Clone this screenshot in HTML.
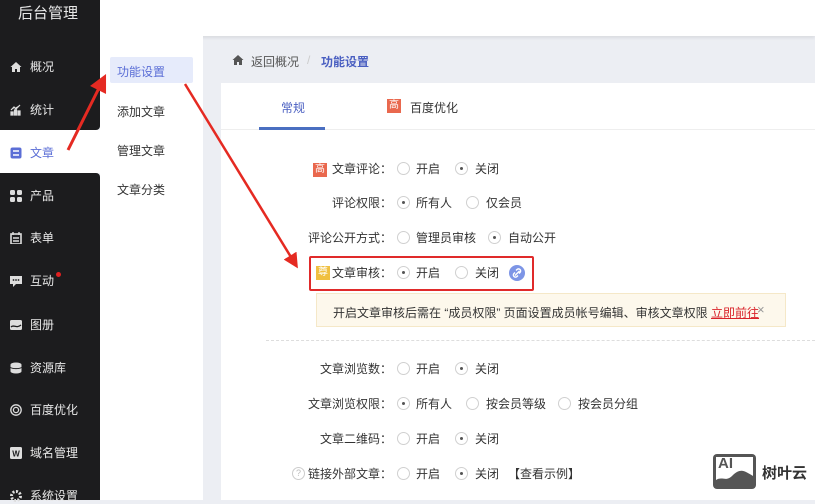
<!DOCTYPE html>
<html><head><meta charset="utf-8"><style>
*{margin:0;padding:0;box-sizing:border-box}
body{width:815px;height:500px;overflow:hidden;position:relative;background:#eceef3;font-family:"Liberation Sans","Noto Sans CJK SC",sans-serif;font-size:12px;color:#333}
.a{position:absolute;white-space:nowrap}
.dark{position:absolute;left:0;width:100px;background:#1c1c1e}
.nav{position:absolute;left:10px;color:#e8e8e8;font-size:12px;display:flex;align-items:center;gap:8px}
.ic{width:12px;height:12px;display:inline-block}
.sub{position:absolute;left:117px;font-size:12px;color:#333}
.r{position:absolute;width:13px;height:13px;border:1px solid #d0d0d0;border-radius:50%;background:#fff}
.r.on::after{content:"";position:absolute;left:4px;top:4px;width:3px;height:3px;border-radius:50%;background:#555}
.lb{position:absolute;right:423px;text-align:right;white-space:nowrap;color:#333;line-height:14px}
.t{position:absolute;white-space:nowrap;color:#333;line-height:14px}
.bd{position:absolute;width:14px;height:14px;color:#fff;font-size:10px;text-align:center;line-height:14px}
</style></head><body>
<div class="a" style="left:100px;top:0;width:715px;height:36px;background:#fff;box-shadow:0 2px 3px rgba(0,0,0,.08)"></div>
<div class="dark" style="top:0;height:130px;border-radius:0 0 4px 0"></div>
<div class="dark" style="top:173px;height:327px;border-radius:0 4px 0 0"></div>
<div class="a" style="left:0;top:130px;width:100px;height:43px;background:#fff"></div>
<div class="a" style="left:18px;top:2px;color:#e8e8e8;font-size:15px">后台管理</div>
<div class="nav" style="top:58px"><svg class="ic" viewBox="0 0 12 12"><path d="M6 1L0.5 6H2v5h3V8h2v3h3V6h1.5z" fill="#ddd"/></svg>概况</div>
<div class="nav" style="top:101px"><svg class="ic" viewBox="0 0 12 12"><path d="M1 11V8h2v3zM4.5 11V6h2v5zM8 11V7h2v4zM1 6l3-3 2 2 4-4" stroke="#ddd" fill="#ddd" stroke-width="1.2"/></svg>统计</div>
<div class="nav" style="top:144px;color:#5b6ed6"><svg class="ic" viewBox="0 0 12 12"><rect x="0.5" y="0.5" width="11" height="11" rx="2" fill="#5b6ed6"/><path d="M3 4h6M3 8h6" stroke="#fff" stroke-width="1.4"/></svg>文章</div>
<div class="nav" style="top:187px"><svg class="ic" viewBox="0 0 12 12"><rect x="0" y="0" width="5" height="5" rx="1.5" fill="#ddd"/><rect x="7" y="0" width="5" height="5" rx="1.5" fill="#ddd"/><rect x="0" y="7" width="5" height="5" rx="1.5" fill="#ddd"/><rect x="7" y="7" width="5" height="5" rx="1.5" fill="#ddd"/></svg>产品</div>
<div class="nav" style="top:229px"><svg class="ic" viewBox="0 0 12 12"><rect x="1" y="2" width="10" height="10" fill="none" stroke="#ddd" stroke-width="1.6"/><path d="M3 0v3M9 0v3M3 6h6M3 9h6" stroke="#ddd" stroke-width="1.4"/></svg>表单</div>
<div class="nav" style="top:272px"><svg class="ic" viewBox="0 0 12 12"><path d="M0 1h12v8H6l-3 3V9H0z" fill="#ddd"/><circle cx="3.5" cy="5" r=".9" fill="#1c1c1e"/><circle cx="6" cy="5" r=".9" fill="#1c1c1e"/><circle cx="8.5" cy="5" r=".9" fill="#1c1c1e"/></svg>互动</div>
<div class="a" style="left:56px;top:272px;width:5px;height:5px;border-radius:50%;background:#e02020"></div>
<div class="nav" style="top:316px"><svg class="ic" viewBox="0 0 12 12"><rect x="0" y="1" width="12" height="10" rx="1.5" fill="#ddd"/><path d="M1 8c3-3 5 2 10-2" stroke="#1c1c1e" stroke-width="1.3" fill="none"/></svg>图册</div>
<div class="nav" style="top:359px"><svg class="ic" viewBox="0 0 12 12"><ellipse cx="6" cy="2.5" rx="5.5" ry="2" fill="#ddd"/><rect x=".5" y="2.5" width="11" height="7" fill="#ddd"/><ellipse cx="6" cy="9.5" rx="5.5" ry="2" fill="#ddd"/><path d="M.5 5.5c2 1.5 9 1.5 11 0" stroke="#1c1c1e" fill="none"/></svg>资源库</div>
<div class="nav" style="top:401px"><svg class="ic" viewBox="0 0 12 12"><circle cx="6" cy="6" r="5.2" fill="none" stroke="#ddd" stroke-width="1.3"/><circle cx="6" cy="6" r="2.6" fill="none" stroke="#ddd" stroke-width="1.3"/></svg>百度优化</div>
<div class="nav" style="top:444px"><svg class="ic" viewBox="0 0 12 12"><rect x="0" y="0" width="12" height="12" rx="1.5" fill="#ddd"/><text x="6" y="9.5" font-size="8" font-weight="bold" text-anchor="middle" fill="#1c1c1e" font-family="Liberation Sans">W</text></svg>域名管理</div>
<div class="nav" style="top:487px"><svg class="ic" viewBox="0 0 12 12"><circle cx="6" cy="6" r="4.5" fill="none" stroke="#ddd" stroke-width="3" stroke-dasharray="2 1.5"/></svg>系统设置</div>
<div class="a" style="left:100px;top:36px;width:103px;height:464px;background:#fff"></div>
<div class="a" style="left:110px;top:57px;width:83px;height:26px;background:#e6ebfb;border-radius:2px"></div>
<div class="sub" style="top:63px;color:#5b6ed6">功能设置</div>
<div class="sub" style="top:103px">添加文章</div>
<div class="sub" style="top:142px">管理文章</div>
<div class="sub" style="top:181px">文章分类</div>
<svg class="a" style="left:232px;top:54px" width="12" height="12" viewBox="0 0 12 12"><path d="M6 1L0.5 6H2v5h3V8h2v3h3V6h1.5z" fill="#555"/></svg>
<div class="a" style="left:251px;top:53px;color:#555">返回概况</div>
<div class="a" style="left:307px;top:53px;color:#ccc">/</div>
<div class="a" style="left:321px;top:53px;color:#4a5fc1;font-weight:bold">功能设置</div>
<div class="a" style="left:221px;top:83px;width:594px;height:417px;background:#fff"></div>
<div class="a" style="left:221px;top:129px;width:594px;height:1px;background:#eee"></div>
<div class="a" style="left:281px;top:99px;color:#4a5fc1">常规</div>
<div class="a" style="left:259px;top:127px;width:66px;height:3px;background:#4a6fc1"></div>
<div class="bd" style="left:387px;top:99px;background:#e9684e">高</div>
<div class="a" style="left:410px;top:99px;color:#333">百度优化</div>

<div class="bd" style="left:313px;top:163px;background:#e9684e">高</div>
<div class="lb" style="top:162px">文章评论：</div>
<div class="r" style="left:397px;top:162px"></div><div class="t" style="left:416px;top:162px">开启</div>
<div class="r on" style="left:455px;top:162px"></div><div class="t" style="left:475px;top:162px">关闭</div>

<div class="lb" style="top:196px">评论权限：</div>
<div class="r on" style="left:397px;top:196px"></div><div class="t" style="left:416px;top:196px">所有人</div>
<div class="r" style="left:466px;top:196px"></div><div class="t" style="left:486px;top:196px">仅会员</div>

<div class="lb" style="top:231px">评论公开方式：</div>
<div class="r" style="left:397px;top:231px"></div><div class="t" style="left:416px;top:231px">管理员审核</div>
<div class="r on" style="left:488px;top:231px"></div><div class="t" style="left:508px;top:231px">自动公开</div>

<div class="a" style="left:309px;top:256px;width:225px;height:35px;border:2px solid #e02a2a;border-radius:2px"></div>
<div class="bd" style="left:316px;top:266px;background:#f0c040">尊</div>
<div class="lb" style="top:266px">文章审核：</div>
<div class="r on" style="left:397px;top:266px"></div><div class="t" style="left:416px;top:266px">开启</div>
<div class="r" style="left:455px;top:266px"></div><div class="t" style="left:475px;top:266px">关闭</div>
<svg class="a" style="left:509px;top:265px" width="16" height="16" viewBox="0 0 16 16"><circle cx="8" cy="8" r="8" fill="#7d95e6"/><path d="M6 10.5L10.5 6M7 5.5l1-1a2 2 0 013 3l-1 1M9 10.5l-1 1a2 2 0 01-3-3l1-1" stroke="#fff" stroke-width="1.4" fill="none"/></svg>

<div class="a" style="left:316px;top:293px;width:470px;height:34px;background:#fdf8ec;border:1px solid #f5e8c8"></div>
<div class="a" style="left:333px;top:304px;color:#333">开启文章审核后需在 “成员权限” 页面设置成员帐号编辑、审核文章权限 <span style="color:#d9232a;text-decoration:underline">立即前往</span></div>
<div class="a" style="left:757px;top:302px;color:#999;font-size:13px">×</div>
<div class="a" style="left:266px;top:340px;width:549px;border-top:1px dashed #ddd"></div>

<div class="lb" style="top:362px">文章浏览数：</div>
<div class="r" style="left:397px;top:362px"></div><div class="t" style="left:416px;top:362px">开启</div>
<div class="r on" style="left:455px;top:362px"></div><div class="t" style="left:475px;top:362px">关闭</div>

<div class="lb" style="top:397px">文章浏览权限：</div>
<div class="r on" style="left:397px;top:397px"></div><div class="t" style="left:416px;top:397px">所有人</div>
<div class="r" style="left:466px;top:397px"></div><div class="t" style="left:486px;top:397px">按会员等级</div>
<div class="r" style="left:558px;top:397px"></div><div class="t" style="left:578px;top:397px">按会员分组</div>

<div class="lb" style="top:432px">文章二维码：</div>
<div class="r" style="left:397px;top:432px"></div><div class="t" style="left:416px;top:432px">开启</div>
<div class="r on" style="left:455px;top:432px"></div><div class="t" style="left:475px;top:432px">关闭</div>

<div class="a" style="left:292px;top:467px;width:13px;height:13px;border:1px solid #ccc;border-radius:50%;color:#bbb;font-size:9px;text-align:center;line-height:11px">?</div>
<div class="lb" style="top:467px">链接外部文章：</div>
<div class="r" style="left:397px;top:467px"></div><div class="t" style="left:416px;top:467px">开启</div>
<div class="r on" style="left:455px;top:467px"></div><div class="t" style="left:475px;top:467px">关闭</div>
<div class="t" style="left:508px;top:467px">【查看示例】</div>

<div class="a" style="left:713px;top:454px;width:43px;height:35px;border-radius:4px;background:#555"></div>
<div class="a" style="left:716px;top:457px;width:37px;height:29px;background:#fff"></div>
<div class="a" style="left:718px;top:455px;font-weight:bold;font-size:15px;color:#555">AI</div>
<svg class="a" style="left:716px;top:466px" width="37" height="20" viewBox="0 0 37 20"><path d="M0 20V14c6-4 10 2 16-4s10-6 14-4 7 4 7 4V20z" fill="#555"/></svg>
<div class="a" style="left:762px;top:462px;font-size:15px;color:#333;font-weight:bold">树叶云</div>

<svg class="a" style="left:0;top:0" width="815" height="500">
<defs><marker id="m" markerWidth="6" markerHeight="6" refX="3" refY="3" orient="auto"><path d="M0 0L6 3L0 6z" fill="#e52a22"/></marker></defs>
<line x1="68" y1="150" x2="102" y2="82" stroke="#e52a22" stroke-width="3" marker-end="url(#m)"/>
<line x1="185" y1="84" x2="294" y2="262" stroke="#e52a22" stroke-width="2.5" marker-end="url(#m)"/>
</svg>
</body></html>
